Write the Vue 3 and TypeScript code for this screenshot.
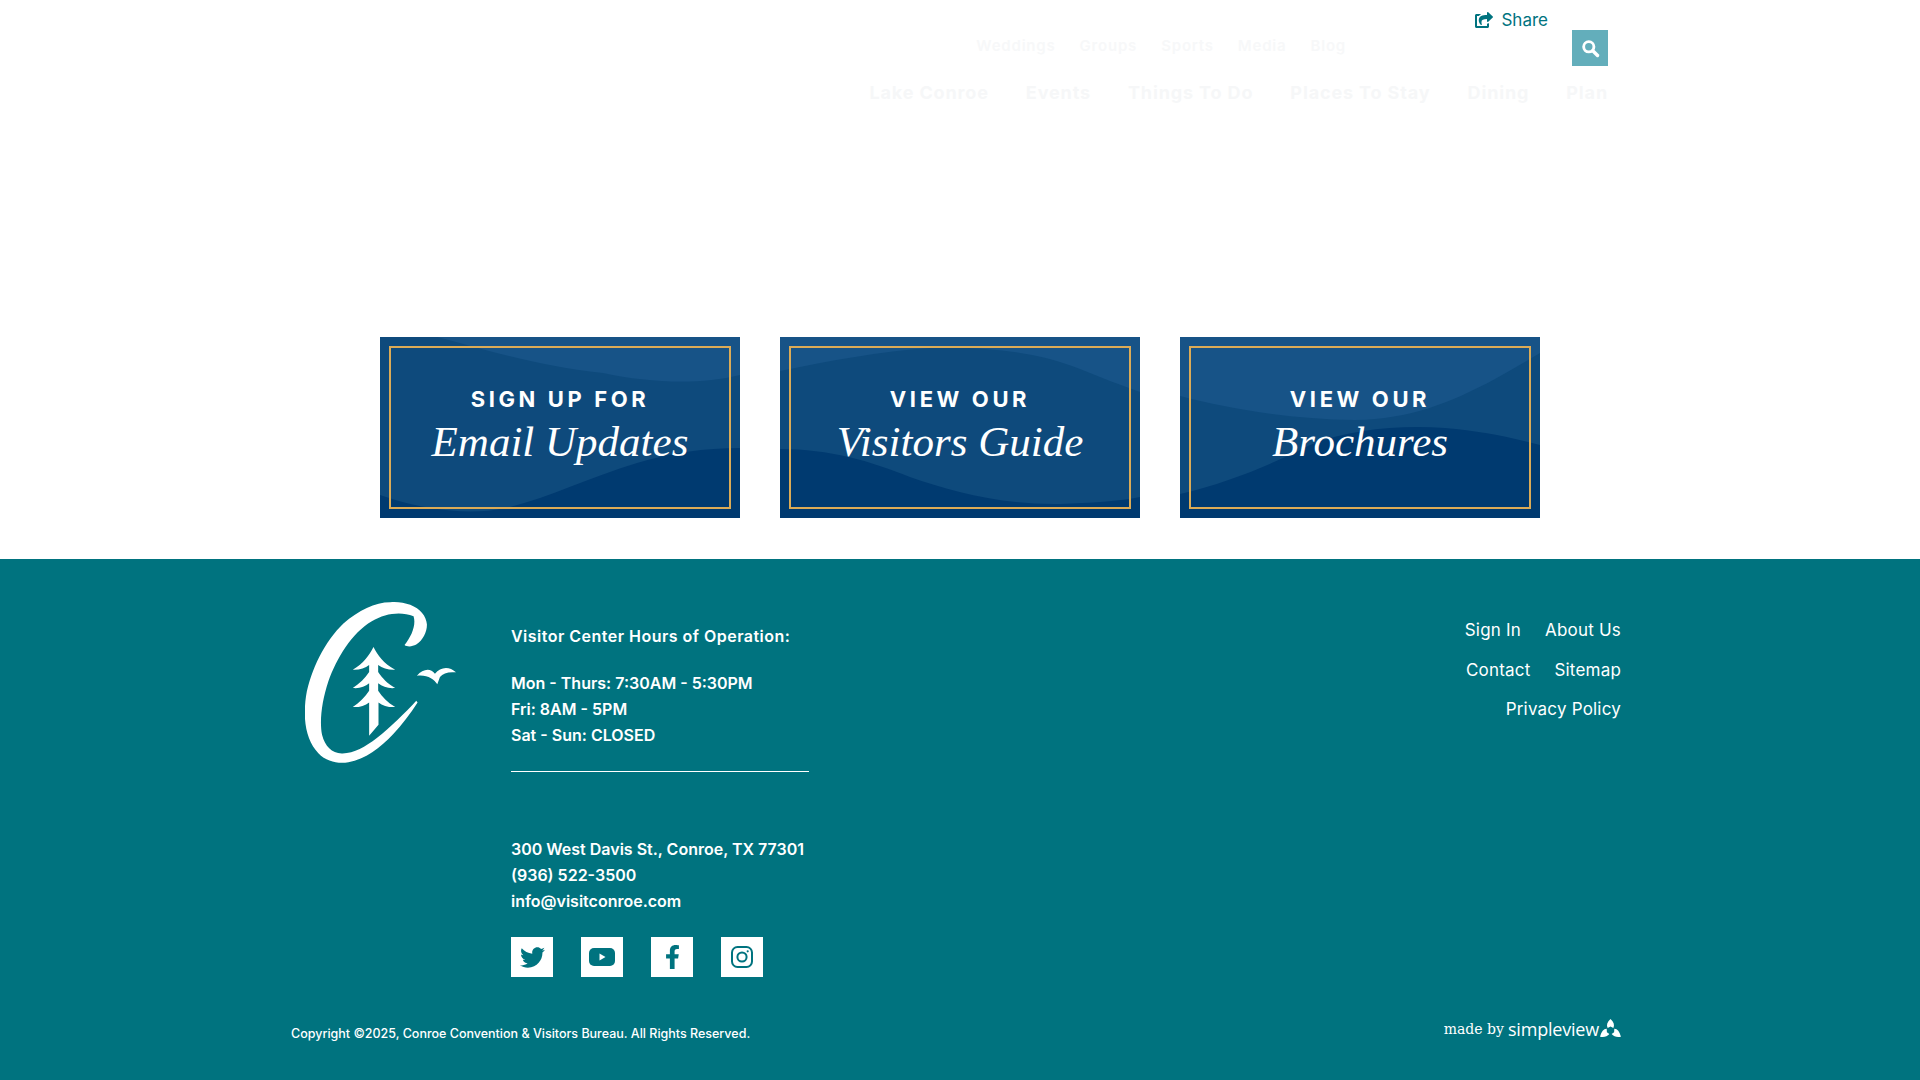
<script setup lang="ts">
const utilityLinks: string[] = ['Weddings', 'Groups', 'Sports', 'Media', 'Blog'];
const mainLinks: string[] = ['Lake Conroe', 'Events', 'Things To Do', 'Places To Stay', 'Dining', 'Plan'];

const cards = [
  {
    top: 'SIGN UP FOR',
    script: 'Email Updates',
    light: 'M57,0 C90,8 150,28 223,36 C270,46 320,48 360,38 V0 Z',
    dark: 'M0,158 C40,172 90,180 130,170 C170,160 210,140 257,126 C290,116 325,111 360,111 V181 H0 Z',
  },
  {
    top: 'VIEW OUR',
    script: 'Visitors Guide',
    light: 'M0,34 C50,24 100,14 150,11 C210,9 260,16 300,32 C320,40 340,48 360,55 V0 H0 Z',
    dark: 'M0,112 C50,112 90,124 130,140 C170,154 220,168 280,167 C310,166 340,164 360,160 V181 H0 Z',
  },
  {
    top: 'VIEW OUR',
    script: 'Brochures',
    light: 'M0,59 C50,72 110,82 175,83 C230,82 270,66 315,42 C330,34 345,25 360,16 V0 H0 Z',
    dark: 'M0,157 C50,145 90,128 130,108 C170,92 220,88 265,91 C300,94 330,100 360,108 V181 H0 Z',
  },
];
</script>

<template>
  <div class="page">
    <header class="header">
      <a class="share">
        <svg class="share-icon" viewBox="0 0 576 512">
          <path d="M568.482 177.448L424.479 313.433C409.3 327.767 384 317.08 384 295.985v-71.963c-144.575.97-205.566 35.113-164.775 171.353 4.483 14.973-12.846 26.567-25.006 17.33C155.252 383.105 120 326.488 120 269.339c0-143.937 117.599-172.5 264-173.312V24.012c0-21.109 25.317-31.766 40.479-17.449l144.003 136c10.02 9.461 10.027 25.425 0 34.885zM384 379.128V448H64V128h50.916a11.99 11.99 0 0 0 8.648-3.693c14.953-15.568 32.237-27.89 51.014-37.676C185.708 80.83 181.584 64 169.033 64H48C21.49 64 0 85.49 0 112v352c0 26.51 21.49 48 48 48h352c26.51 0 48-21.49 48-48V372c0-8-8-12-16-9-12 5-32 12-48 16.128z" />
        </svg>
        <span>Share</span>
      </a>
      <div class="utility">
        <nav class="utility-nav">
          <a v-for="link in utilityLinks" :key="link">{{ link }}</a>
        </nav>
        <button class="search" aria-label="Search">
          <svg viewBox="0 0 20 20" width="19" height="19">
            <circle cx="8.2" cy="8.2" r="5.4" fill="none" stroke="#fff" stroke-width="3" />
            <path d="M12.4 12.4 L17.4 17.4" stroke="#fff" stroke-width="3.6" stroke-linecap="round" />
          </svg>
        </button>
      </div>
      <nav class="main-nav">
        <a v-for="link in mainLinks" :key="link">{{ link }}</a>
      </nav>
    </header>

    <section class="cards">
      <a v-for="card in cards" :key="card.script" class="card">
        <svg class="card-bg" viewBox="0 0 360 181" preserveAspectRatio="none">
          <path :d="card.light" fill="#175387" />
          <path :d="card.dark" fill="#003a70" />
        </svg>
        <div class="card-frame">
          <span class="card-top">{{ card.top }}</span>
          <span class="card-script">{{ card.script }}</span>
        </div>
      </a>
    </section>

    <footer class="footer">
      <div class="footer-main">
        <svg class="logo" viewBox="45 35 452 484" fill="#fff">
          <path d="M300,38 C255,38 205,62 160,102 C105,155 62,240 48,320 C38,390 48,450 85,490 C110,516 145,522 175,517 C225,508 270,475 310,432 C335,405 360,372 382,338 L378,333 C345,370 300,412 260,445 C225,472 190,492 155,491 C125,490 105,470 96,435 C88,395 95,335 115,275 C140,205 185,130 245,95 C285,72 330,65 370,80 C378,105 365,140 343,166 C350,172 365,172 378,165 C398,152 410,128 410,105 C408,80 390,58 360,46 C342,39 320,36 300,38 Z" />
          <path d="M250,172 C262,195 280,222 315,240 C295,241 277,236 264,226 L264,247 C276,265 292,282 315,295 C295,297 277,292 264,281 L264,303 C276,322 292,338 315,352 C295,353 277,348 265,338 L265,405 L237,438 L237,338 C225,348 207,353 188,352 C208,338 225,322 237,303 L237,281 C225,292 207,297 188,295 C208,282 225,265 237,247 L237,226 C225,236 207,241 188,240 C220,222 238,195 250,172 Z" />
          <path d="M380,258 C398,238 420,234 434,252 C450,232 476,228 497,248 C474,246 458,250 449,262 L441,284 C432,268 410,254 380,258 Z" />
        </svg>

        <div class="info">
          <p class="hours-title">Visitor Center Hours of Operation:</p>
          <p class="lines">
            <span>Mon - Thurs: 7:30AM - 5:30PM</span>
            <span>Fri: 8AM - 5PM</span>
            <span>Sat - Sun: CLOSED</span>
          </p>
          <hr class="rule" />
          <p class="lines">
            <span>300 West Davis St., Conroe, TX 77301</span>
            <span>(936) 522-3500</span>
            <span>info@visitconroe.com</span>
          </p>
          <div class="socials">
            <a class="social" aria-label="Twitter">
              <svg viewBox="0 0 512 512" width="25" height="25" fill="#00737f">
                <path d="M459.37 151.716c.325 4.548.325 9.097.325 13.645 0 138.72-105.583 298.558-298.558 298.558-59.452 0-114.68-17.219-161.137-47.106 8.447.974 16.568 1.299 25.34 1.299 49.055 0 94.213-16.568 130.274-44.832-46.132-.975-84.792-31.188-98.112-72.772 6.498.974 12.995 1.624 19.818 1.624 9.421 0 18.843-1.3 27.614-3.573-48.081-9.747-84.143-51.98-84.143-102.985v-1.299c13.969 7.797 30.214 12.67 47.431 13.319-28.264-18.843-46.781-51.005-46.781-87.391 0-19.492 5.197-37.36 14.294-52.954 51.655 63.675 129.3 105.258 216.365 109.807-1.624-7.797-2.599-15.918-2.599-24.04 0-57.828 46.782-104.934 104.934-104.934 30.213 0 57.502 12.67 76.67 33.137 23.715-4.548 46.456-13.32 66.599-25.34-7.798 24.366-24.366 44.833-46.132 57.827 21.117-2.273 41.584-8.122 60.426-16.243-14.292 20.791-32.161 39.308-52.628 54.253z" />
              </svg>
            </a>
            <a class="social" aria-label="YouTube">
              <svg viewBox="0 0 26 18" width="26" height="18">
                <rect width="26" height="18" rx="5" fill="#00737f" />
                <path d="M10.5 5.5 L16.5 9 L10.5 12.5 Z" fill="#fff" />
              </svg>
            </a>
            <a class="social" aria-label="Facebook">
              <svg viewBox="0 0 320 512" width="15" height="24" fill="#00737f">
                <path d="M279.14 288l14.22-92.66h-88.91v-60.13c0-25.35 12.42-50.06 52.24-50.06h40.42V6.26S260.43 0 225.36 0c-73.22 0-121.08 44.38-121.08 124.72v70.62H22.89V288h81.39v224h100.17V288z" />
              </svg>
            </a>
            <a class="social" aria-label="Instagram">
              <svg viewBox="0 0 22 22" width="22" height="22" fill="none" stroke="#00737f" stroke-width="2">
                <rect x="1" y="1" width="20" height="20" rx="5.5" />
                <circle cx="11" cy="11" r="4.6" />
                <circle cx="16.7" cy="5.3" r="1.1" fill="#00737f" stroke="none" />
              </svg>
            </a>
          </div>
        </div>

        <nav class="footer-links">
          <div class="link-row"><a>Sign In</a><a>About Us</a></div>
          <div class="link-row"><a>Contact</a><a>Sitemap</a></div>
          <div class="link-row"><a>Privacy Policy</a></div>
        </nav>
      </div>

      <div class="footer-bottom">
        <span class="copyright">Copyright ©2025, Conroe Convention &amp; Visitors Bureau. All Rights Reserved.</span>
        <span class="made">
          <span class="made-by">made by</span>
          <span class="made-name">simpleview</span>
          <svg class="made-mark" viewBox="0 0 22 20" width="21" height="19" fill="#fff">
            <path d="M11 0 C14.5 3 15.5 6.5 14 9.5 L11 7.8 L8 9.5 C6.5 6.5 7.5 3 11 0 Z" />
            <path d="M15 10.2 C18 10 20.5 13 22 18.6 C18 19.6 14.4 18.4 12.2 15.8 L14.8 14 Z" />
            <path d="M7 10.2 C4 10 1.5 13 0 18.6 C4 19.6 7.6 18.4 9.8 15.8 L7.2 14 Z" />
          </svg>
        </span>
      </div>
    </footer>
  </div>
</template>

<style>
html,
body {
  margin: 0;
  background: #fff;
}
</style>

<style scoped>
.page {
  width: 1920px;
  height: 1080px;
  overflow: hidden;
  font-family: Inter, "Open Sans", sans-serif;
  color: #fff;
}
p {
  margin: 0;
}

.header {
  height: 337px;
  box-sizing: border-box;
  padding-right: 312px;
  display: flex;
  flex-direction: column;
  align-items: flex-end;
}
.share {
  height: 30px;
  margin-right: 60px;
  padding-top: 10px;
  box-sizing: border-box;
  display: flex;
  align-items: center;
  gap: 8px;
  color: #00737f;
  font-size: 17px;
}
.share-icon {
  width: 18px;
  height: 16px;
  fill: #00737f;
}
.utility {
  display: flex;
  align-items: flex-start;
}
.utility-nav {
  display: flex;
  gap: 24px;
  margin-right: 226px;
  padding-top: 7px;
  font-size: 15px;
  font-weight: 600;
  line-height: 18px;
  letter-spacing: 0.8px;
  color: #f7f8f9;
}
.search {
  width: 36px;
  height: 36px;
  padding: 0;
  border: 0;
  background: #63aebb;
  display: flex;
  align-items: center;
  justify-content: center;
}
.main-nav {
  display: flex;
  gap: 37px;
  margin-top: 16px;
  font-size: 18px;
  font-weight: 700;
  line-height: 22px;
  letter-spacing: 0.87px;
  color: #f6f7f8;
}

.cards {
  display: flex;
  gap: 40px;
  padding-left: 380px;
}
.card {
  position: relative;
  width: 360px;
  height: 181px;
  box-sizing: border-box;
  padding: 9px;
  background: #0e4a7c;
}
.card-bg {
  position: absolute;
  inset: 0;
  width: 100%;
  height: 100%;
}
.card-frame {
  position: relative;
  height: 100%;
  box-sizing: border-box;
  border: 2px solid #dcab56;
  display: flex;
  flex-direction: column;
  align-items: center;
  padding-top: 38px;
}
.card-top {
  font-size: 22px;
  font-weight: 700;
  line-height: 26px;
  letter-spacing: 3.6px;
}
.card-script {
  margin-top: 4px;
  font-family: "Liberation Serif", serif;
  font-style: italic;
  font-size: 43px;
  line-height: 52px;
  white-space: nowrap;
}

.footer {
  margin-top: 41px;
  height: 521px;
  box-sizing: border-box;
  background: #00737f;
  padding: 42px 299px 0 305px;
  position: relative;
  display: flex;
  flex-direction: column;
}
.footer-main {
  display: flex;
  align-items: flex-start;
}
.logo {
  width: 151px;
  height: 162px;
  flex: none;
  margin-right: 55px;
}
.info {
  font-size: 16px;
  font-weight: 600;
  line-height: 26px;
  padding-top: 22px;
}
.hours-title {
  margin-bottom: 21px;
  letter-spacing: 0.48px;
  white-space: nowrap;
}
.lines span {
  display: block;
  white-space: nowrap;
}
.rule {
  width: 298px;
  height: 1px;
  border: 0;
  background: #fff;
  margin: 23px 0 64px;
}
.socials {
  display: flex;
  gap: 28px;
  margin-top: 23px;
}
.social {
  width: 42px;
  height: 40px;
  background: #fff;
  display: flex;
  align-items: center;
  justify-content: center;
}
.footer-links {
  margin-left: auto;
  padding-top: 17px;
  font-size: 17px;
  letter-spacing: 0.2px;
  line-height: 24px;
  display: flex;
  flex-direction: column;
  gap: 15.5px;
}
.link-row {
  display: flex;
  justify-content: flex-end;
  gap: 24px;
}
.footer-bottom {
  margin: 49px 0 0 -14px;
  display: flex;
  justify-content: space-between;
  align-items: center;
}
.copyright {
  font-size: 12.5px;
  font-weight: 500;
}
.made {
  display: flex;
  align-items: center;
  gap: 4px;
  margin-top: -10px;
}
.made-by {
  font-family: "DejaVu Serif", serif;
  font-size: 14px;
}
.made-name {
  font-family: "Open Sans", sans-serif;
  font-size: 18px;
  letter-spacing: -0.2px;
}
.made-mark {
  margin-left: -3px;
}
</style>
